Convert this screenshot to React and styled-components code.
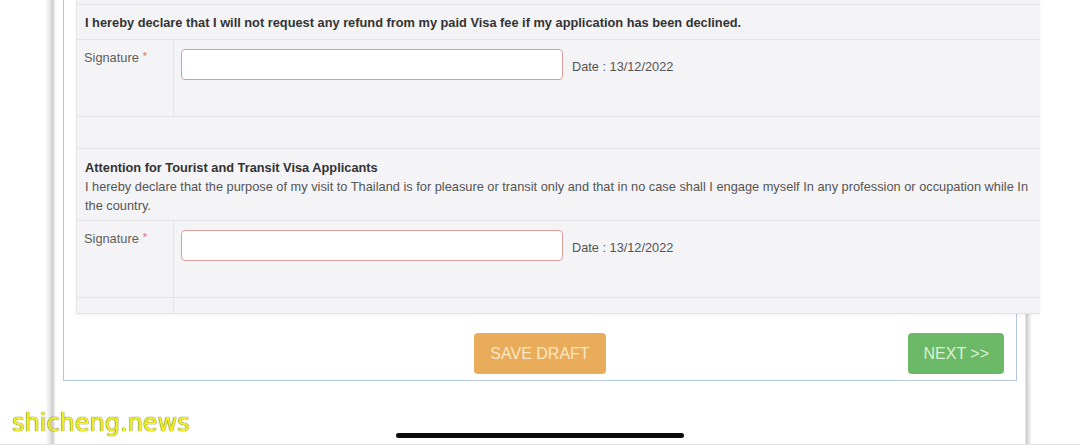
import styled, { createGlobalStyle } from "styled-components";

const GlobalStyle = createGlobalStyle`
  html, body {
    margin: 0;
    padding: 0;
    background: #ffffff;
    overflow: hidden;
  }
  body {
    font-family: "Liberation Sans", Arial, sans-serif;
  }
`;

const Screen = styled.div`
  position: relative;
  width: 1080px;
  height: 445px;
  overflow: hidden;
  background: #ffffff;
  border-bottom: 1px solid #e2e2e2;
  box-sizing: border-box;
`;

const Device = styled.div`
  margin-left: 45px;
  width: 987px;
  height: 445px;
  background: linear-gradient(
    to right,
    #ffffff 0px,
    #ececec 4px,
    #cdcdcd 8px,
    #f6f6f6 10px,
    #ffffff 11px,
    #ffffff 980px,
    #c9c9c9 981px,
    #e6e6e6 984px,
    #ffffff 987px
  );
`;

const Form = styled.div`
  margin-left: 18px;
  width: 954px;
  box-sizing: border-box;
  border: 1px solid #b3c6de;
  border-top: none;
  padding: 0 12px 6px;
  background: #ffffff;
`;

const Panel = styled.div`
  width: 964px;
  box-sizing: border-box;
  background: #f4f3f5;
  border-left: 1px solid #e6e5e8;
  border-bottom: 1px solid #e4e3e6;
  box-shadow: 0 1px 2px rgba(0, 0, 0, 0.05);
`;

const Row = styled.div`
  box-sizing: border-box;
  height: ${(p) => p.h}px;
  border-bottom: ${(p) => (p.last ? "none" : "1px solid #e5e4e7")};
`;

const SplitRow = styled(Row)`
  display: grid;
  grid-template-columns: 97px 1fr;
`;

const BoldLine = styled(Row)`
  display: flex;
  align-items: center;
  padding: 0 8px;
  font-size: 12.8px;
  font-weight: bold;
  color: #333333;
`;

const TextBlock = styled(Row)`
  padding: 9px 7px 0 8px;
  font-size: 12.8px;
  line-height: 19px;
  color: #555555;

  strong {
    display: block;
    color: #333333;
  }
`;

const LabelCell = styled.div`
  border-right: 1px solid #e5e4e7;
  padding: 9px 7px 0;
  font-size: 12.8px;
  line-height: 15px;
  color: #5f5f5f;
`;

const Star = styled.span`
  color: #e07070;
  font-size: 11px;
  vertical-align: 2px;
  margin-left: 4px;
`;

const FieldCell = styled.div`
  display: flex;
  align-items: flex-start;
  gap: 9px;
  padding: 9px 7px 0;
`;

const SignatureInput = styled.input`
  width: 382px;
  height: 31px;
  box-sizing: border-box;
  border: 1px solid #dc9c9c;
  border-radius: 4px;
  background: #ffffff;
  outline: none;
`;

const DateText = styled.div`
  padding-top: 11px;
  font-size: 12.75px;
  line-height: 14px;
  color: #555555;
`;

const Actions = styled.div`
  display: grid;
  grid-template-columns: 1fr auto 1fr;
  align-items: center;
  margin-top: 19px;
`;

const Button = styled.button`
  grid-column: ${(p) => p.col};
  justify-self: ${(p) => (p.col === 3 ? "end" : "center")};
  height: 41px;
  padding: 0 ${(p) => p.px}px;
  border: none;
  border-radius: 4px;
  background: ${(p) => p.bg};
  color: ${(p) => p.fg};
  font-family: "Liberation Sans", Arial, sans-serif;
  font-size: 16px;
  cursor: pointer;
`;

const HomeBar = styled.div`
  position: absolute;
  left: 396px;
  top: 433px;
  width: 288px;
  height: 5px;
  border-radius: 3px;
  background: #0a0a0a;
`;

const Watermark = styled.div`
  position: absolute;
  left: 12px;
  top: 409px;
  font-family: "DejaVu Sans", sans-serif;
  font-size: 24px;
  line-height: 28px;
  color: #f2f21e;
  text-shadow: 0 0 1px #6b6b2a, 0 0 1px #6b6b2a;
`;

function SignatureRow({ h }) {
  return (
    <SplitRow h={h}>
      <LabelCell>
        Signature<Star>*</Star>
      </LabelCell>
      <FieldCell>
        <SignatureInput type="text" />
        <DateText>Date : 13/12/2022</DateText>
      </FieldCell>
    </SplitRow>
  );
}

export default function App() {
  return (
    <Screen>
      <GlobalStyle />
      <Device>
        <Form>
          <Panel>
            <Row h={5} />
            <BoldLine h={35}>
              I hereby declare that I will not request any refund from my paid Visa fee if my
              application has been declined.
            </BoldLine>
            <SignatureRow h={77} />
            <Row h={32} />
            <TextBlock h={72}>
              <strong>Attention for Tourist and Transit Visa Applicants</strong>
              I hereby declare that the purpose of my visit to Thailand is for pleasure or transit
              only and that in no case shall I engage myself In any profession or occupation while
              In the country.
            </TextBlock>
            <SignatureRow h={77} />
            <SplitRow h={15} last>
              <LabelCell />
              <div />
            </SplitRow>
          </Panel>
          <Actions>
            <Button col={2} px={16} bg="#e9ac5a" fg="#fce7c4">
              SAVE DRAFT
            </Button>
            <Button col={3} px={15} bg="#6bb866" fg="#dcf2d4">
              NEXT &gt;&gt;
            </Button>
          </Actions>
        </Form>
      </Device>
      <HomeBar />
      <Watermark>shicheng.news</Watermark>
    </Screen>
  );
}
